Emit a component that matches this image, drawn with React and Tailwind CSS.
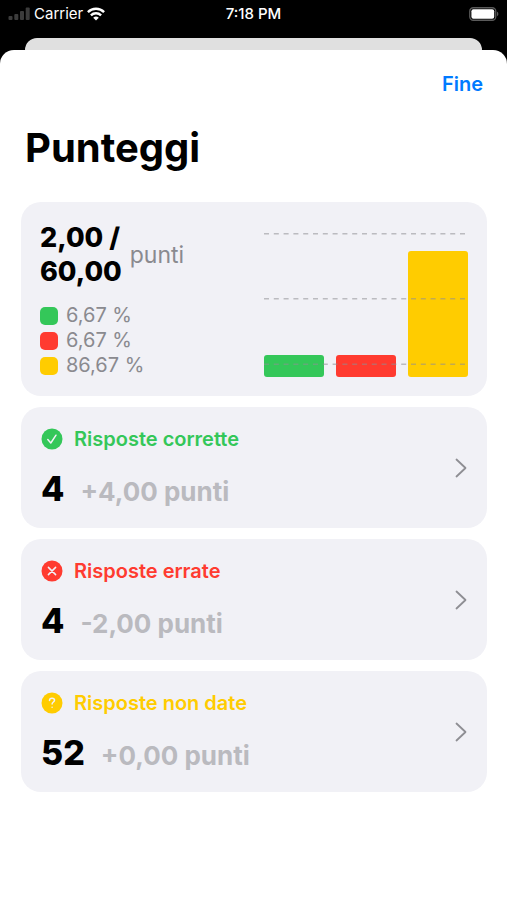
const answers = [
  { kind: 'correct', label: 'Risposte corrette', count: '4', points: '+4,00 punti', color: 'text-[#34c759]' },
  { kind: 'wrong', label: 'Risposte errate', count: '4', points: '-2,00 punti', color: 'text-[#ff3b30]' },
  { kind: 'empty', label: 'Risposte non date', count: '52', points: '+0,00 punti', color: 'text-[#ffcc00]' },
]

const legend = [
  { id: 'correct', value: '6,67 %', color: 'bg-[#34c759]' },
  { id: 'wrong', value: '6,67 %', color: 'bg-[#ff3b30]' },
  { id: 'empty', value: '86,67 %', color: 'bg-[#ffcc00]' },
]

const glyphs = {
  correct: 'M6.8 11.6l3 3.4L15 7.2',
  wrong: 'M7.4 7.4l7.2 7.2M14.6 7.4l-7.2 7.2',
  empty: 'M8.5 8.4c0-1.3 1-2.2 2.5-2.2s2.5.8 2.5 2.1c0 1.7-2.4 1.7-2.4 3.7M11.1 15.2v.1',
}

function StatusIcon({ kind }) {
  return (
    <svg viewBox="0 0 22 22" className="size-[22px] shrink-0" aria-hidden="true">
      <circle cx="11" cy="11" r="10.5" fill="currentColor" />
      <path
        d={glyphs[kind]}
        fill="none"
        stroke="#f2f2f7"
        strokeWidth="1.5"
        strokeLinecap="round"
        strokeLinejoin="round"
      />
    </svg>
  )
}

function SignalIcon() {
  return (
    <svg viewBox="0 0 22 14" className="h-[14px] w-[22px]" fill="#3c3c3c" aria-hidden="true">
      <rect x="0.5" y="9" width="4" height="4" rx="1" />
      <rect x="6.3" y="7" width="4" height="6" rx="1" />
      <rect x="12" y="4" width="4" height="9" rx="1" />
      <rect x="17.7" y="0.5" width="4" height="12.5" rx="1" />
    </svg>
  )
}

function WifiIcon() {
  return (
    <svg viewBox="0 0 18 14" className="h-[14px] w-[18px]" fill="none" stroke="#fff" strokeWidth="2.4" aria-hidden="true">
      <path d="M.9 5.1a11.6 11.6 0 0 1 16.2 0" />
      <path d="M3.9 8.3a7.3 7.3 0 0 1 10.2 0" />
      <path d="M9 13.6L6.2 10.8a4 4 0 0 1 5.6 0z" fill="#fff" stroke="none" />
    </svg>
  )
}

function BatteryIcon() {
  return (
    <svg viewBox="0 0 30 14" className="h-[14px] w-[30px]" aria-hidden="true">
      <rect x="0.75" y="0.75" width="26" height="12.5" rx="3.5" fill="none" stroke="#5a5a5a" strokeWidth="1.3" />
      <rect x="2.4" y="2.2" width="22.8" height="9.6" rx="2" fill="#fff" />
      <path d="M28 4.8c1.8.6 1.8 3.8 0 4.4z" fill="#5a5a5a" />
    </svg>
  )
}

function StatusBar() {
  return (
    <div className="grid h-7 grid-cols-3 items-center px-2 text-[15px] text-white">
      <div className="flex items-center gap-1">
        <SignalIcon />
        <span>Carrier</span>
        <WifiIcon />
      </div>
      <span className="text-center font-medium">7:18 PM</span>
      <div className="flex justify-end">
        <BatteryIcon />
      </div>
    </div>
  )
}

function BarChart() {
  return (
    <svg
      viewBox="0 0 204 147"
      className="h-[147px] w-[204px] shrink-0 self-end"
      role="img"
      aria-label="Percentuali delle risposte"
    >
      <rect x="0" y="124" width="60" height="22" rx="3" fill="#34c759" />
      <rect x="72" y="124" width="60" height="22" rx="3" fill="#ff3b30" />
      <rect x="144" y="20" width="60" height="126" rx="3" fill="#ffcc00" />
      <g stroke="#8e8e93" strokeOpacity="0.55" strokeWidth="1.4" strokeDasharray="5 4.8">
        <path d="M0 2.7h202" />
        <path d="M0 67.7h202" />
        <path d="M0 133.2h202" />
      </g>
    </svg>
  )
}

function ScoreCard() {
  return (
    <section className="flex items-center justify-between rounded-[20px] bg-[#f1f1f6] px-[19px] pt-[19px] pb-[18px]">
      <div>
        <div className="flex items-center gap-2">
          <p className="text-[27px] leading-[34px] font-extrabold">
            2,00 /<br />
            60,00
          </p>
          <p className="text-[23px] text-[#8a8a8f]">punti</p>
        </div>
        <ul className="mt-[14px]">
          {legend.map((item) => (
            <li key={item.id} className="flex items-center gap-2 text-xl leading-[25px] text-[#8a8a8f]">
              <span className={`size-[18px] rounded-[5px] ${item.color}`} />
              {item.value}
            </li>
          ))}
        </ul>
      </div>
      <BarChart />
    </section>
  )
}

function AnswerCard({ kind, label, count, points, color }) {
  return (
    <button
      type="button"
      className="flex h-[121px] w-full items-center justify-between rounded-[20px] bg-[#f1f1f6] px-5 text-left"
    >
      <span className="pt-[3px]">
        <span className={`flex items-center gap-[11px] text-xl leading-7 font-semibold ${color}`}>
          <StatusIcon kind={kind} />
          {label}
        </span>
        <span className="mt-[15px] flex items-baseline gap-4 leading-[42px]">
          <span className="text-[34px] font-extrabold">{count}</span>
          <span className="text-[26px] font-bold text-[#bababf]">{points}</span>
        </span>
      </span>
      <svg viewBox="0 0 12 20" className="h-5 w-3 shrink-0" fill="none" stroke="#8e8e93" strokeWidth="1.8" aria-hidden="true">
        <path d="M1.5 1.5l9 8.5-9 8.5" strokeLinecap="round" strokeLinejoin="round" />
      </svg>
    </button>
  )
}

export default function App() {
  return (
    <div className="flex min-h-screen flex-col bg-black font-['Inter',sans-serif] text-black">
      <StatusBar />
      <div className="mx-[25px] mt-[10px] h-3 rounded-t-[12px] bg-[#e0e0e0]" />
      <main className="flex-1 rounded-t-[14px] bg-white pr-5 pb-8 pl-[21px]">
        <div className="flex justify-end pt-5 pr-1">
          <button type="button" className="text-xl leading-7 font-semibold text-[#007aff]">
            Fine
          </button>
        </div>
        <h1 className="mt-[25px] pl-1 text-[40px] leading-[50px] font-bold">Punteggi</h1>
        <div className="mt-[29px] flex flex-col gap-[11px]">
          <ScoreCard />
          {answers.map((answer) => (
            <AnswerCard key={answer.kind} {...answer} />
          ))}
        </div>
      </main>
    </div>
  )
}
